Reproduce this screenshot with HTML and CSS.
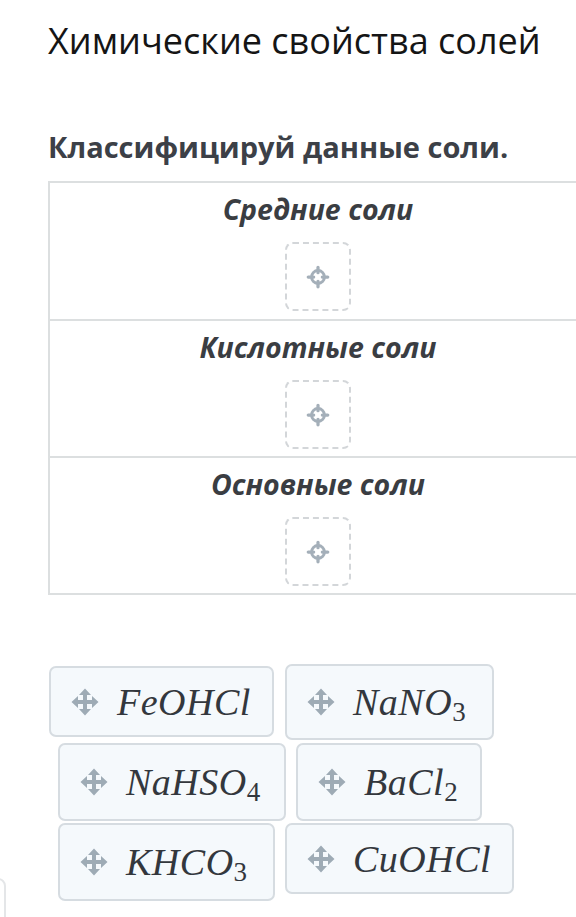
FILE: index.html
```html
<!DOCTYPE html>
<html lang="ru">
<head>
<meta charset="utf-8">
<link rel="stylesheet" href="styles.css">
</head>
<body>
<div class="page">
  <h1 class="title">Химические свойства солей</h1>
  <h2 class="question">Классифицируй данные соли.</h2>
  <div class="table">
    <div class="cat">
      <div class="cat-name">Средние соли</div>
      <div class="drop"><svg class="target" viewBox="0 0 24 24"><circle cx="12" cy="12" r="6" fill="none" stroke="#a4afb9" stroke-width="2.6"/><path d="M12 3v5M12 16v5M3 12h5M16 12h5" stroke="#a4afb9" stroke-width="3" stroke-linecap="round"/></svg></div>
    </div>
    <div class="cat">
      <div class="cat-name">Кислотные соли</div>
      <div class="drop"><svg class="target" viewBox="0 0 24 24"><circle cx="12" cy="12" r="6" fill="none" stroke="#a4afb9" stroke-width="2.6"/><path d="M12 3v5M12 16v5M3 12h5M16 12h5" stroke="#a4afb9" stroke-width="3" stroke-linecap="round"/></svg></div>
    </div>
    <div class="cat">
      <div class="cat-name">Основные соли</div>
      <div class="drop"><svg class="target" viewBox="0 0 24 24"><circle cx="12" cy="12" r="6" fill="none" stroke="#a4afb9" stroke-width="2.6"/><path d="M12 3v5M12 16v5M3 12h5M16 12h5" stroke="#a4afb9" stroke-width="3" stroke-linecap="round"/></svg></div>
    </div>
  </div>
  <div class="chips">
    <div class="chip-row r1">
      <div class="chip c1"><svg class="move" viewBox="0 0 28 28"><path d="M14 6v16M6 14h16" stroke="#9eabb5" stroke-width="4"/><path d="M14 0.5l-6 6.5h12zM14 27.5l-6-6.5h12zM0.5 14l6.5-6v12zM27.5 14l-6.5-6v12z" fill="#9eabb5"/></svg><span class="f">FeOHCl</span></div>
      <div class="chip c2"><svg class="move" viewBox="0 0 28 28"><path d="M14 6v16M6 14h16" stroke="#9eabb5" stroke-width="4"/><path d="M14 0.5l-6 6.5h12zM14 27.5l-6-6.5h12zM0.5 14l6.5-6v12zM27.5 14l-6.5-6v12z" fill="#9eabb5"/></svg><span class="f">NaNO<sub>3</sub></span></div>
    </div>
    <div class="chip-row r2">
      <div class="chip c3"><svg class="move" viewBox="0 0 28 28"><path d="M14 6v16M6 14h16" stroke="#9eabb5" stroke-width="4"/><path d="M14 0.5l-6 6.5h12zM14 27.5l-6-6.5h12zM0.5 14l6.5-6v12zM27.5 14l-6.5-6v12z" fill="#9eabb5"/></svg><span class="f">NaHSO<sub>4</sub></span></div>
      <div class="chip c4"><svg class="move" viewBox="0 0 28 28"><path d="M14 6v16M6 14h16" stroke="#9eabb5" stroke-width="4"/><path d="M14 0.5l-6 6.5h12zM14 27.5l-6-6.5h12zM0.5 14l6.5-6v12zM27.5 14l-6.5-6v12z" fill="#9eabb5"/></svg><span class="f">BaCl<sub>2</sub></span></div>
    </div>
    <div class="chip-row r3">
      <div class="chip c5"><svg class="move" viewBox="0 0 28 28"><path d="M14 6v16M6 14h16" stroke="#9eabb5" stroke-width="4"/><path d="M14 0.5l-6 6.5h12zM14 27.5l-6-6.5h12zM0.5 14l6.5-6v12zM27.5 14l-6.5-6v12z" fill="#9eabb5"/></svg><span class="f">KHCO<sub>3</sub></span></div>
      <div class="chip c6"><svg class="move" viewBox="0 0 28 28"><path d="M14 6v16M6 14h16" stroke="#9eabb5" stroke-width="4"/><path d="M14 0.5l-6 6.5h12zM14 27.5l-6-6.5h12zM0.5 14l6.5-6v12zM27.5 14l-6.5-6v12z" fill="#9eabb5"/></svg><span class="f">CuOHCl</span></div>
    </div>
  </div>
</div>
<div class="side-widget"></div>
</body>
</html>
```
FILE: styles.css
```css
html, body {
  margin: 0;
  padding: 0;
  background: #ffffff;
  overflow: hidden;
}
body {
  position: relative;
  width: 576px;
  height: 917px;
}
.page {
  width: 576px;
  height: 917px;
  padding-left: 48px;
  box-sizing: border-box;
  font-family: "Open Sans", "Noto Sans", sans-serif;
  overflow: hidden;
}
.title {
  margin: 0;
  padding-top: 17px;
  font-size: 36px;
  font-weight: 400;
  line-height: 48px;
  color: #151515;
  white-space: nowrap;
}
.question {
  margin: 0;
  padding-top: 62px;
  font-size: 29px;
  font-weight: 700;
  line-height: 40px;
  color: #3c4047;
  white-space: nowrap;
}
.table {
  margin-top: 14px;
  width: 540px;
  border: 2px solid #dcdfe0;
  box-sizing: border-box;
}
.cat {
  height: 137px;
  box-sizing: border-box;
  border-top: 2px solid #dcdfe0;
  display: flex;
  flex-direction: column;
  align-items: center;
  padding-top: 7px;
}
.cat:first-child {
  border-top: none;
  height: 136px;
}
.cat-name {
  font-size: 28.5px;
  font-weight: 700;
  font-style: italic;
  line-height: 38px;
  color: #3a3d42;
}
.drop {
  margin-top: 14px;
  width: 66px;
  height: 69px;
  box-sizing: border-box;
  border: 2px dashed #d3d6d9;
  border-radius: 8px;
  display: flex;
  align-items: center;
  justify-content: center;
}
.target {
  width: 26px;
  height: 26px;
}
.chips {
  margin-top: 69px;
  display: flex;
  flex-direction: column;
}
.chip-row {
  display: flex;
}
.chip {
  box-sizing: border-box;
  background: #f5f9fc;
  border: 2px solid #d6dce1;
  border-radius: 7px;
  display: flex;
  align-items: center;
  padding-left: 20px;
  color: #33373d;
}
.move {
  width: 28px;
  height: 28px;
  flex: none;
}
.f {
  font-family: "Liberation Serif", "DejaVu Serif", serif;
  font-style: italic;
  font-size: 38px;
  margin-left: 18px;
  white-space: nowrap;
  line-height: 40px;
  letter-spacing: 0.5px;
}
.f sub {
  font-style: normal;
  font-size: 27px;
  vertical-align: -6px;
  line-height: 0;
}
.r1 { margin-left: 1px; }
.r2 { margin-left: 10px; margin-top: 3px; }
.r3 { margin-left: 10px; margin-top: 2px; }
.c1 { width: 225px; height: 71px; margin-top: 2px; }
.c2 { width: 209px; height: 76px; margin-left: 11px; }
.c3 { width: 228px; height: 78px; }
.c4 { width: 186px; height: 78px; margin-left: 10px; }
.c5 { width: 217px; height: 78px; }
.c6 { width: 229px; height: 71px; margin-left: 10px; }
.side-widget {
  position: absolute;
  left: -20px;
  top: 878px;
  width: 22px;
  height: 60px;
  border: 2px solid #e4e6e8;
  border-radius: 8px;
}
```
